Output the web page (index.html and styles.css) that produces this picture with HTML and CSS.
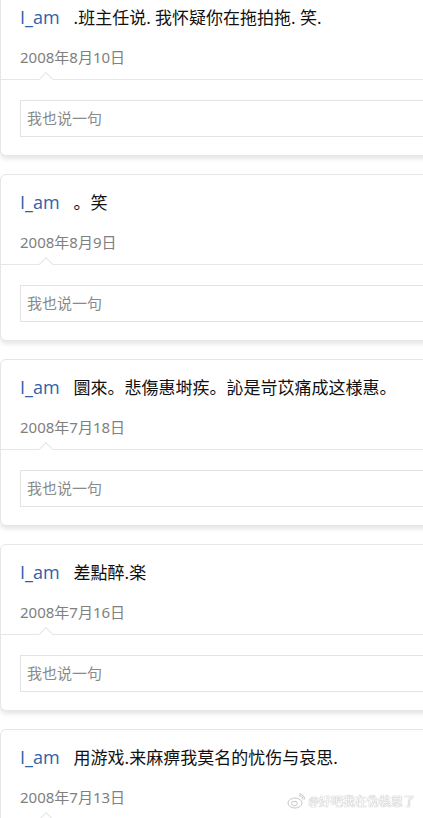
FILE: index.html
```html
<!DOCTYPE html>
<html lang="zh-CN">
<head>
    <meta charset="UTF-8">
    <meta name="viewport" content="width=device-width, initial-scale=1.0">
    <title>说说</title>
    <link rel="stylesheet" href="styles.css">
</head>
<body>
    <!-- 说说列表 -->
    <div class="feed">
        <div class="card">
            <div class="post">
                <p class="line"><span class="name">I_am</span><span class="text">.班主任说. 我怀疑你在拖拍拖. 笑.</span></p>
                <p class="date">2008年8月10日</p>
            </div>
            <div class="reply">
                <div class="reply-box">我也说一句</div>
            </div>
        </div>

        <div class="card">
            <div class="post">
                <p class="line"><span class="name">I_am</span><span class="text">。笑</span></p>
                <p class="date">2008年8月9日</p>
            </div>
            <div class="reply">
                <div class="reply-box">我也说一句</div>
            </div>
        </div>

        <div class="card">
            <div class="post">
                <p class="line"><span class="name">I_am</span><span class="text">圜來。悲傷惠埘疾。訫是岢苡痛成这様惠。</span></p>
                <p class="date">2008年7月18日</p>
            </div>
            <div class="reply">
                <div class="reply-box">我也说一句</div>
            </div>
        </div>

        <div class="card">
            <div class="post">
                <p class="line"><span class="name">I_am</span><span class="text">差點醉.楽</span></p>
                <p class="date">2008年7月16日</p>
            </div>
            <div class="reply">
                <div class="reply-box">我也说一句</div>
            </div>
        </div>

        <div class="card">
            <div class="post">
                <p class="line"><span class="name">I_am</span><span class="text">用游戏.来麻痹我莫名的忧伤与哀思.</span></p>
                <p class="date">2008年7月13日</p>
            </div>
            <div class="reply">
                <div class="reply-box">我也说一句</div>
            </div>
        </div>
    </div>

    <!-- 水印 -->
    <div class="watermark">
        <svg width="18" height="16" viewBox="0 0 18 16">
            <ellipse cx="8" cy="10" rx="7" ry="5" fill="#fff" stroke="#bbb" stroke-width="1"/>
            <ellipse cx="7.5" cy="10.5" rx="3" ry="2.2" fill="none" stroke="#bbb" stroke-width="1"/>
            <path d="M12 2.5 a4 4 0 0 1 4 4" fill="none" stroke="#bbb" stroke-width="1"/>
            <path d="M12 0.8 a6 6 0 0 1 5.6 5.6" fill="none" stroke="#bbb" stroke-width="1"/>
        </svg>
        <span>@好吧我在伪装思了</span>
    </div>
</body>
</html>
```

FILE: styles.css
```css
/* 전체 페이지 */
body, html {
    margin: 0;
    padding: 0;
    width: 100%;
    height: 100%;
    overflow: hidden;
    background: #fff;
    font-family: "Noto Sans", "Noto Sans CJK SC", sans-serif;
}

/* 목록 */
.feed {
    margin-top: -11px;
}

/* 카드 */
.card {
    width: 470px;
    margin-bottom: 18px;
    background: #fff;
    border: 1px solid #e6e6e6;
    border-radius: 6px;
    box-shadow: 0 3px 4px rgba(0, 0, 0, 0.1);
}

.post {
    padding: 16px 19px 11px;
}

.line {
    margin: 0;
    height: 24px;
    line-height: 24px;
    font-size: 17px;
    white-space: nowrap;
}

.name {
    font-family: "Open Sans", "Noto Sans CJK SC", sans-serif;
    font-size: 18px;
    line-height: 1;
    color: #2f62aa;
    margin-right: 14px;
}

.text {
    color: #111;
}

.date {
    margin: 16px 0 0;
    line-height: 22px;
    font-size: 15px;
    color: #808080;
}

/* 댓글 입력 */
.reply {
    position: relative;
    border-top: 1px solid #e6e6e6;
    padding: 20px 0 18px 19px;
}

.reply::before {
    content: "";
    position: absolute;
    left: 40px;
    top: -6px;
    width: 9px;
    height: 9px;
    background: #fff;
    border-top: 1px solid #e6e6e6;
    border-left: 1px solid #e6e6e6;
    transform: rotate(45deg);
}

.reply-box {
    height: 35px;
    line-height: 35px;
    border: 1px solid #e3e3e3;
    padding-left: 6px;
    font-size: 15px;
    color: #8a8a8a;
}

/* 워터마크 */
.watermark {
    position: fixed;
    right: 8px;
    bottom: 8px;
    display: flex;
    align-items: center;
    gap: 3px;
    font-size: 12px;
    color: #fff;
    text-shadow: 0 0 1px #999, 0 0 1px #999;
    opacity: 0.85;
}
```
